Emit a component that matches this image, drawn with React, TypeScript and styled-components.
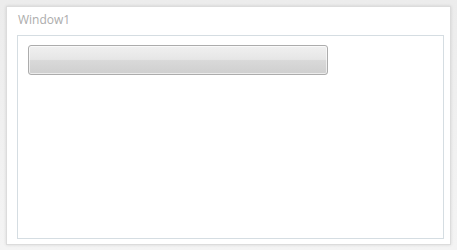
import React from "react";
import styled, { createGlobalStyle } from "styled-components";

const GlobalStyle = createGlobalStyle`
    html, body {
        margin: 0;
        padding: 0;
        background: #ffffff;
    }
`;

const Desktop = styled.div`
    box-sizing: border-box;
    width: 457px;
    height: 250px;
    padding: 6px 6px 5px 6px;
    background: linear-gradient(#ececec, #f4f4f4);
    display: flex;
`;

const Window = styled.div`
    box-sizing: border-box;
    flex: 1;
    display: flex;
    flex-direction: column;

    background: #ffffff;
    border: 1px solid #dcdcdc;
    box-shadow: 0 0 3px rgba(0, 0, 0, 0.12);
`;

const Title = styled.div`
    height: 28px;
    padding: 4px 0 0 11px;
    box-sizing: border-box;

    font-family: "Open Sans", "Liberation Sans", sans-serif;
    font-size: 12px;
    color: #acacac;
`;

const Panel = styled.div`
    flex: 1;
    margin: 0 6px 5px 10px;
    padding: 9px 10px;

    border: 1px solid #d5dde2;
`;

const Button = styled.button`
    display: block;
    box-sizing: border-box;
    width: 300px;
    height: 30px;
    padding: 0;

    border: 1px solid #acacac;
    border-radius: 3px;
    background: linear-gradient(
        #f0f0f0 0%,
        #e6e6e6 48%,
        #d9d9d9 52%,
        #cfcfcf 100%
    );
    box-shadow: inset 0 0 0 1px rgba(255, 255, 255, 0.6);
`;

export default function App() {
    return (
        <>
            <GlobalStyle />
            <Desktop>
                <Window>
                    <Title>Window1</Title>
                    <Panel>
                        <Button type="button" />
                    </Panel>
                </Window>
            </Desktop>
        </>
    );
}
